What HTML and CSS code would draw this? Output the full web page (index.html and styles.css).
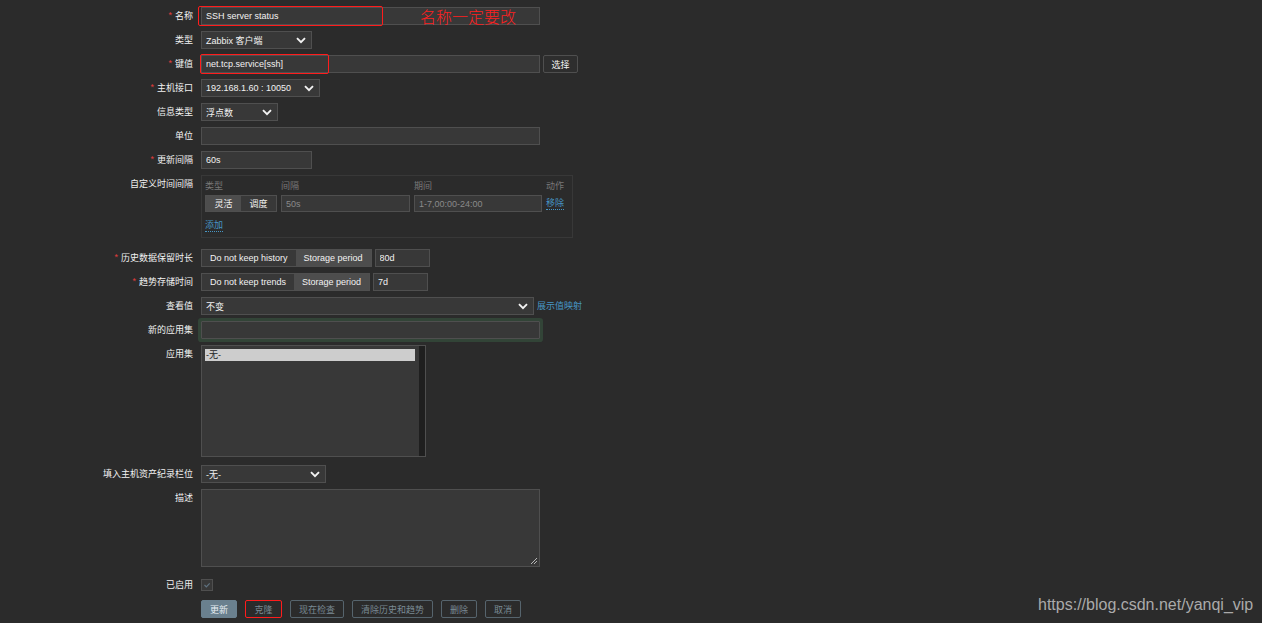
FILE: index.html
```html
<!DOCTYPE html>
<html lang="zh-CN">
<head>
    <meta charset="UTF-8">
    <title>监控项</title>
    <link rel="stylesheet" href="styles.css">
</head>
<body>
    <form class="item-form">
        <!-- 名称 -->
        <div class="row">
            <label class="lbl required">名称</label>
            <div class="field">
                <div class="overlay-wrap">
                    <input class="txt w-wide" value="SSH server status">
                    <span class="mark mark-name"></span>
                    <span class="note">名称一定要改</span>
                </div>
            </div>
        </div>

        <div class="row">
            <label class="lbl">类型</label>
            <div class="field">
                <div class="select w-type"><span>Zabbix 客户端</span><svg class="chev" viewBox="0 0 10 7"><path d="M1 1.2l4 4 4-4"/></svg></div>
            </div>
        </div>

        <div class="row">
            <label class="lbl required">键值</label>
            <div class="field inline">
                <div class="overlay-wrap">
                    <input class="txt w-wide" value="net.tcp.service[ssh]">
                    <span class="mark mark-key"></span>
                </div>
                <button type="button" class="btn-pick">选择</button>
            </div>
        </div>

        <div class="row">
            <label class="lbl required">主机接口</label>
            <div class="field">
                <div class="select w-iface"><span>192.168.1.60 : 10050</span><svg class="chev" viewBox="0 0 10 7"><path d="M1 1.2l4 4 4-4"/></svg></div>
            </div>
        </div>

        <div class="row">
            <label class="lbl">信息类型</label>
            <div class="field">
                <div class="select w-info"><span>浮点数</span><svg class="chev" viewBox="0 0 10 7"><path d="M1 1.2l4 4 4-4"/></svg></div>
            </div>
        </div>

        <div class="row">
            <label class="lbl">单位</label>
            <div class="field"><input class="txt w-wide" value=""></div>
        </div>

        <div class="row">
            <label class="lbl required">更新间隔</label>
            <div class="field"><input class="txt w-short" value="60s"></div>
        </div>

        <!-- 自定义时间间隔 -->
        <div class="row row-gap-lg">
            <label class="lbl">自定义时间间隔</label>
            <div class="field">
                <div class="interval-box">
                    <div class="interval-grid">
                        <span class="col-head">类型</span>
                        <span class="col-head">间隔</span>
                        <span class="col-head">期间</span>
                        <span class="col-head">动作</span>

                        <div class="seg seg-sm">
                            <span class="seg-item on">灵活</span>
                            <span class="seg-item">调度</span>
                        </div>
                        <input class="txt dim" value="50s">
                        <input class="txt dim" value="1-7,00:00-24:00">
                        <a class="link" href="#">移除</a>
                    </div>
                    <a class="link add" href="#">添加</a>
                </div>
            </div>
        </div>

        <div class="row">
            <label class="lbl required">历史数据保留时长</label>
            <div class="field inline">
                <div class="seg">
                    <span class="seg-item pad">Do not keep history</span>
                    <span class="seg-item pad on">Storage period</span>
                </div>
                <input class="txt w-days" value="80d">
            </div>
        </div>

        <div class="row">
            <label class="lbl required">趋势存储时间</label>
            <div class="field inline">
                <div class="seg">
                    <span class="seg-item pad">Do not keep trends</span>
                    <span class="seg-item pad on">Storage period</span>
                </div>
                <input class="txt w-days" value="7d">
            </div>
        </div>

        <div class="row">
            <label class="lbl">查看值</label>
            <div class="field inline">
                <div class="select w-view"><span>不变</span><svg class="chev" viewBox="0 0 10 7"><path d="M1 1.2l4 4 4-4"/></svg></div>
                <a class="link" href="#">展示值映射</a>
            </div>
        </div>

        <div class="row">
            <label class="lbl">新的应用集</label>
            <div class="field"><input class="txt w-wide focused" value=""></div>
        </div>

        <div class="row row-gap-md">
            <label class="lbl">应用集</label>
            <div class="field">
                <div class="listbox">
                    <div class="list-items">
                        <div class="list-item selected">-无-</div>
                    </div>
                    <div class="list-scroll"></div>
                </div>
            </div>
        </div>

        <div class="row">
            <label class="lbl">填入主机资产纪录栏位</label>
            <div class="field">
                <div class="select w-inv"><span>-无-</span><svg class="chev" viewBox="0 0 10 7"><path d="M1 1.2l4 4 4-4"/></svg></div>
            </div>
        </div>

        <div class="row row-gap-desc">
            <label class="lbl">描述</label>
            <div class="field">
                <div class="textarea">
                    <svg class="grip" viewBox="0 0 8 8"><path d="M7 1L1 7M7 4L4 7"/></svg>
                </div>
            </div>
        </div>

        <div class="row">
            <label class="lbl">已启用</label>
            <div class="field centered">
                <span class="check"><svg viewBox="0 0 12 12"><path d="M3 6l2.2 2.2L9.2 4"/></svg></span>
            </div>
        </div>

        <div class="row">
            <span></span>
            <div class="field buttons">
                <button type="button" class="btn primary w-2">更新</button>
                <button type="button" class="btn marked">克隆</button>
                <button type="button" class="btn w-4">现在检查</button>
                <button type="button" class="btn w-7">清除历史和趋势</button>
                <button type="button" class="btn w-2">删除</button>
                <button type="button" class="btn w-2">取消</button>
            </div>
        </div>
    </form>

    <div class="watermark">https://blog.csdn.net/yanqi_vip</div>
</body>
</html>
```

FILE: styles.css
```css
/* Base */
* {
    margin: 0;
    padding: 0;
    box-sizing: border-box;
}

body {
    background: #2b2b2b;
    color: #f2f2f2;
    font-family: "Liberation Sans", "Noto Sans CJK SC", sans-serif;
    font-size: 9px;
    height: 623px;
    overflow: hidden;
    position: relative;
}

.item-form {
    padding-top: 7px;
}

/* Rows */
.row {
    display: grid;
    grid-template-columns: 193px 1fr;
    column-gap: 8px;
    margin-bottom: 6px;
}

.row-gap-lg {
    margin-bottom: 11px;
}

.row-gap-md {
    margin-bottom: 8px;
}

.row-gap-desc {
    margin-bottom: 9px;
}

.lbl {
    text-align: right;
    line-height: 18px;
    color: #f2f2f2;
    white-space: nowrap;
}

.lbl.required::before {
    content: "*";
    color: #e33d3d;
    margin-right: 3px;
    font-size: 9px;
    position: relative;
    top: -1px;
}

.field {
    display: flex;
    align-items: flex-start;
}

.field.centered {
    align-items: center;
}

.field.inline {
    gap: 3px;
    align-items: center;
}

/* Inputs */
.txt {
    height: 18px;
    background: #383838;
    border: 1px solid #4f4f4f;
    color: #f2f2f2;
    font: inherit;
    padding: 0 4px;
    outline: none;
}

.txt.dim {
    height: 17px;
    color: #8a8a8a;
    width: 100%;
}

.w-wide { width: 339px; }
.w-short { width: 111px; }
.w-days { width: 55px; }

.txt.focused {
    box-shadow: 0 0 0 3px #324437;
    border-radius: 1px;
}

.select {
    height: 18px;
    background: #383838;
    border: 1px solid #4f4f4f;
    display: flex;
    align-items: center;
    justify-content: space-between;
    padding: 0 5px 0 4px;
    white-space: nowrap;
}

.w-type { width: 111px; }
.w-iface { width: 119px; }
.w-info { width: 77px; }
.w-view { width: 333px; }
.w-inv { width: 125px; }

.chev {
    width: 10px;
    height: 7px;
    fill: none;
    stroke: #f2f2f2;
    stroke-width: 1.9;
}

/* Annotations drawn over the screenshot */
.overlay-wrap {
    position: relative;
    display: flex;
}

.mark {
    position: absolute;
    border: 1px solid #ff1c1c;
    border-radius: 2px;
    pointer-events: none;
}

.mark-name {
    left: -3px;
    top: -1px;
    width: 185px;
    height: 20px;
}

.mark-key {
    left: -1px;
    top: -1px;
    width: 129px;
    height: 20px;
}

.note {
    position: absolute;
    left: 219px;
    top: -1px;
    font-family: "Noto Sans CJK SC", sans-serif;
    font-weight: 300;
    font-size: 16px;
    line-height: 20px;
    color: #ff2020;
    white-space: nowrap;
}

.btn-pick {
    height: 18px;
    width: 35px;
    background: #2e2e2e;
    border: 1px solid #4f4f4f;
    border-radius: 2px;
    color: #f2f2f2;
    font: inherit;
}

/* Custom intervals */
.interval-box {
    width: 372px;
    height: 63px;
    border: 1px solid #383838;
    padding: 4px 3px 0;
}

.interval-grid {
    display: grid;
    grid-template-columns: 72px 129px 128px auto;
    column-gap: 4px;
    row-gap: 3px;
    align-items: center;
}

.col-head {
    color: #787878;
    line-height: 12px;
}

.link {
    color: #4796c4;
    text-decoration: none;
    border-bottom: 1px dotted #4796c4;
    line-height: 11px;
    white-space: nowrap;
    justify-self: start;
}

.link.add {
    display: inline-block;
    margin-top: 8px;
}

.field.inline .link {
    border-bottom: none;
}

/* Segmented radio */
.seg {
    display: flex;
    height: 18px;
    border: 1px solid #4f4f4f;
}

.seg-sm {
    height: 17px;
}

.seg-item {
    flex: 1;
    display: flex;
    align-items: center;
    justify-content: center;
    background: #383838;
    white-space: nowrap;
}

.seg-item.on {
    background: #4d4d4d;
}

.seg-item.pad {
    flex: none;
    padding: 0 8px;
}

/* Listbox */
.listbox {
    width: 225px;
    height: 112px;
    background: #383838;
    border: 1px solid #4f4f4f;
    display: flex;
}

.list-items {
    flex: 1;
    padding: 3px 4px 0 3px;
}

.list-item {
    line-height: 12px;
    padding-left: 1px;
}

.list-item.selected {
    background: #cdcdcd;
    color: #1e1e1e;
}

.list-scroll {
    width: 6px;
    background: #1f1f1f;
}

/* Textarea */
.textarea {
    width: 339px;
    height: 78px;
    background: #383838;
    border: 1px solid #4f4f4f;
    position: relative;
}

.grip {
    position: absolute;
    right: 1px;
    bottom: 1px;
    width: 8px;
    height: 8px;
    stroke: #b8b8b8;
    stroke-width: 1;
    fill: none;
}

/* Checkbox */
.check {
    display: block;
    width: 12px;
    height: 12px;
    background: #383838;
    border: 1px solid #4f4f4f;
}

.check svg {
    display: block;
    width: 10px;
    height: 10px;
    fill: none;
    stroke: #5f7280;
    stroke-width: 1.4;
}

/* Buttons */
.buttons {
    gap: 8px;
}

.btn {
    height: 18px;
    padding: 0;
    background: transparent;
    border: 1px solid #56646d;
    border-radius: 2px;
    color: #7a8a94;
    font: inherit;
    white-space: nowrap;
}

.w-2 { width: 36px; }
.w-4 { width: 54px; }
.w-7 { width: 81px; }

.btn.primary {
    background: #6a808e;
    border-color: #6a808e;
    color: #e8eef2;
}

.btn.marked {
    border-color: #ff1c1c;
    width: 37px;
}

/* Watermark */
.watermark {
    position: absolute;
    left: 1038px;
    top: 596px;
    font-family: "Liberation Sans", sans-serif;
    font-size: 16px;
    line-height: 18px;
    color: #aaaaaa;
}
```
